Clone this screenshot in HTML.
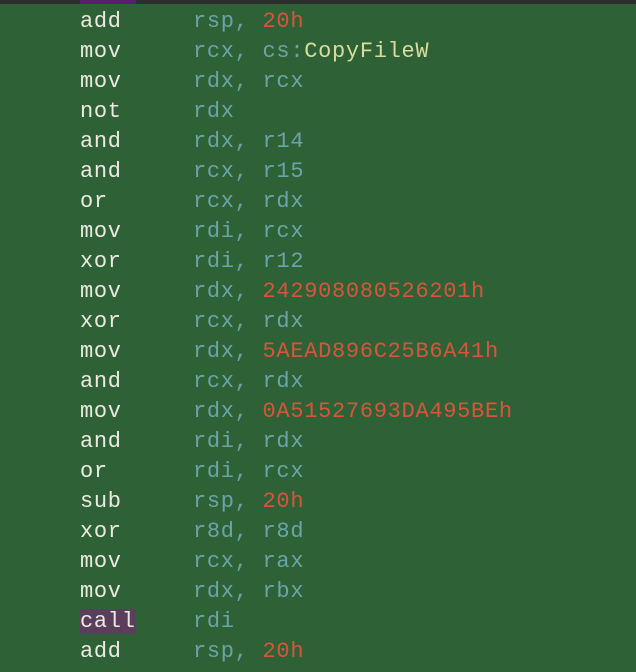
<!DOCTYPE html>
<html><head><style>
html,body{margin:0;padding:0;}
body{width:636px;height:672px;background:#2f6137;position:relative;overflow:hidden;font-family:"Liberation Mono","DejaVu Sans Mono",monospace;font-size:22px;letter-spacing:0.7px;}
.top{position:absolute;left:0;top:0;width:636px;height:4px;background:#2b2d2e;}
.pb{position:absolute;left:80px;top:0;width:56px;height:4px;background:#5a1e6e;}
.r{position:absolute;height:30px;line-height:30px;white-space:pre;margin-top:2px;}
.m{left:80px;color:#eceae0;}
.o{left:193px;color:#6aa4a6;}
.n{color:#d7553b;}
.y{color:#d8dc9c;}
.hl{background:#5b3d5c;}
</style></head><body>
<div class="top"></div><div class="pb"></div>
<div class="r m" style="top:5px">add</div><div class="r o" style="top:5px">rsp, <span class="n">20h</span></div>
<div class="r m" style="top:35px">mov</div><div class="r o" style="top:35px">rcx, cs:<span class="y">CopyFileW</span></div>
<div class="r m" style="top:65px">mov</div><div class="r o" style="top:65px">rdx, rcx</div>
<div class="r m" style="top:95px">not</div><div class="r o" style="top:95px">rdx</div>
<div class="r m" style="top:125px">and</div><div class="r o" style="top:125px">rdx, r14</div>
<div class="r m" style="top:155px">and</div><div class="r o" style="top:155px">rcx, r15</div>
<div class="r m" style="top:185px">or</div><div class="r o" style="top:185px">rcx, rdx</div>
<div class="r m" style="top:215px">mov</div><div class="r o" style="top:215px">rdi, rcx</div>
<div class="r m" style="top:245px">xor</div><div class="r o" style="top:245px">rdi, r12</div>
<div class="r m" style="top:275px">mov</div><div class="r o" style="top:275px">rdx, <span class="n">242908080526201h</span></div>
<div class="r m" style="top:305px">xor</div><div class="r o" style="top:305px">rcx, rdx</div>
<div class="r m" style="top:335px">mov</div><div class="r o" style="top:335px">rdx, <span class="n">5AEAD896C25B6A41h</span></div>
<div class="r m" style="top:365px">and</div><div class="r o" style="top:365px">rcx, rdx</div>
<div class="r m" style="top:395px">mov</div><div class="r o" style="top:395px">rdx, <span class="n">0A51527693DA495BEh</span></div>
<div class="r m" style="top:425px">and</div><div class="r o" style="top:425px">rdi, rdx</div>
<div class="r m" style="top:455px">or</div><div class="r o" style="top:455px">rdi, rcx</div>
<div class="r m" style="top:485px">sub</div><div class="r o" style="top:485px">rsp, <span class="n">20h</span></div>
<div class="r m" style="top:515px">xor</div><div class="r o" style="top:515px">r8d, r8d</div>
<div class="r m" style="top:545px">mov</div><div class="r o" style="top:545px">rcx, rax</div>
<div class="r m" style="top:575px">mov</div><div class="r o" style="top:575px">rdx, rbx</div>
<div class="r m" style="top:605px"><span class="hl">call</span></div><div class="r o" style="top:605px">rdi</div>
<div class="r m" style="top:635px">add</div><div class="r o" style="top:635px">rsp, <span class="n">20h</span></div>
</body></html>
